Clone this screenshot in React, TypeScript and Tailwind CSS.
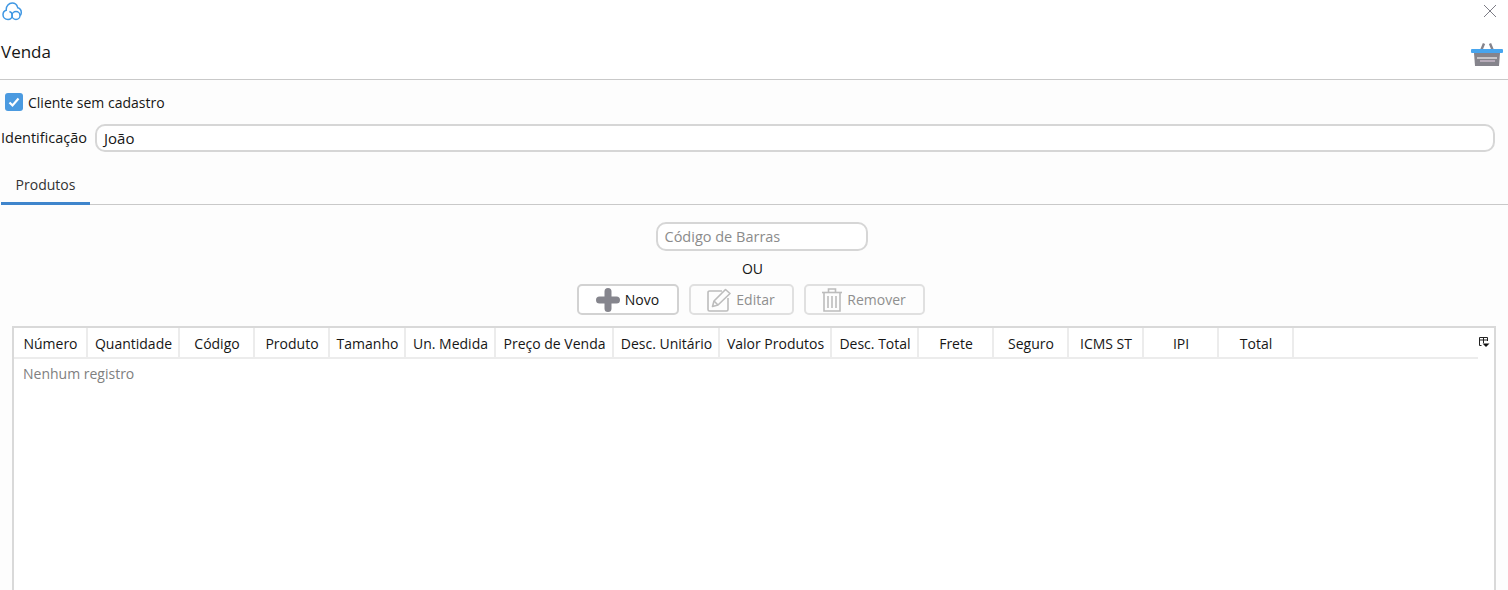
import React from 'react';

const columns = [
  { label: 'Número', width: 'w-[74px]' },
  { label: 'Quantidade', width: 'w-[92px]' },
  { label: 'Código', width: 'w-[75px]' },
  { label: 'Produto', width: 'w-[75px]' },
  { label: 'Tamanho', width: 'w-[76px]' },
  { label: 'Un. Medida', width: 'w-[90px]' },
  { label: 'Preço de Venda', width: 'w-[118px]' },
  { label: 'Desc. Unitário', width: 'w-[106px]' },
  { label: 'Valor Produtos', width: 'w-[112px]' },
  { label: 'Desc. Total', width: 'w-[87px]' },
  { label: 'Frete', width: 'w-[75px]' },
  { label: 'Seguro', width: 'w-[75px]' },
  { label: 'ICMS ST', width: 'w-[75px]' },
  { label: 'IPI', width: 'w-[75px]' },
  { label: 'Total', width: 'w-[75px]' },
];

const CloudIcon = () => (
  <svg width="22" height="22" viewBox="0 0 22 22" fill="none" stroke="#3f97e3" strokeWidth="1.5">
    <path d="M7 19.500C4 19.500 2 17.300 2 14.800C2 12.500 3.500 10.800 5.300 10.300C5.300 10 5.200 9.700 5.200 9.400C5.200 6.200 7.800 3 11.200 3C13.800 3 15.800 4.600 16.500 7" />
    <path d="M7 19.500C9.600 19.500 11.200 17.500 11.200 15.200C11.200 13.400 10 12 8.400 11.500" />
    <circle cx="15" cy="15.500" r="4" />
    <path d="M16 7.500C18.500 8 20.300 10 20.300 12.500C20.300 13.600 19.900 14.600 19.300 15.500" />
  </svg>
);

const CloseIcon = () => (
  <svg width="14" height="14" viewBox="0 0 14 14" stroke="#7d7d86" strokeWidth="1" fill="none">
    <path d="M1 1L13 13M13 1L1 13" />
  </svg>
);

const BasketIcon = () => (
  <svg width="32" height="26" viewBox="0 0 32 26">
    <path d="M9.500 11L13 2.500M22.500 11L19 2.500" stroke="#85848c" strokeWidth="2.400" fill="none" />
    <rect x="0" y="8" width="32" height="4" rx="1" fill="#47a5ee" />
    <path d="M3 12H29L28 25H4Z" fill="#85848c" />
    <path d="M6 17H26" stroke="#f4f4f4" strokeWidth="1.200" />
    <path d="M9 20H24" stroke="#d9c6d9" strokeWidth="1.200" />
  </svg>
);

const PlusIcon = () => (
  <svg width="24" height="24" viewBox="0 0 24 24" fill="none" stroke="#85858d" strokeWidth="7" strokeLinecap="round">
    <path d="M12 3.500V20.500M3.500 12H20.500" />
  </svg>
);

const EditIcon = () => (
  <svg width="24" height="24" viewBox="0 0 24 24" fill="none" stroke="#bcbcbc" strokeWidth="1.600" strokeLinejoin="round">
    <path d="M15 3H2.500A1.500 1.500 0 0 0 1 4.500V21.500A1.500 1.500 0 0 0 2.500 23H19.500A1.500 1.500 0 0 0 21 21.500V10" />
    <path d="M5.500 18.500L7 13L18.500 1.500L23 5.500L11 17Z" />
    <path d="M7 13L11 17" />
  </svg>
);

const TrashIcon = () => (
  <svg width="20" height="24" viewBox="0 0 20 24" fill="none" stroke="#bcbcbc" strokeWidth="1.600">
    <path d="M0 4.500H20" />
    <path d="M6.500 4.500V1H13.500V4.500" />
    <path d="M2 4.500V23H18V4.500" />
    <path d="M6 8V20M10 8V20M14 8V20" />
  </svg>
);

const ColumnPickerIcon = () => (
  <svg width="12" height="12" viewBox="0 0 12 12">
    <path d="M1.500 9.500V1.500H9.500V5M1.500 4H9.500M5.500 1.500V7M1.500 9.500H3.500" stroke="#222" strokeWidth="1" fill="none" />
    <path d="M4.500 7.500H11.500L8 11Z" fill="#111" />
  </svg>
);

export default function App(): React.ReactElement {
  return (
    <div className="h-[590px] w-[1508px] overflow-hidden bg-[#fdfdfd] font-['Open_Sans','Noto_Sans',sans-serif] text-[14px] text-[#161616]">
      <header className="h-[80px] bg-white border-b border-[#c9c9c9] pl-px pr-[5px]">
        <div className="h-[41px] flex justify-between">
          <CloudIcon />
          <div className="pt-[4px] pr-[6px]"><CloseIcon /></div>
        </div>
        <div className="flex justify-between items-start">
          <h1 className="text-[17px] leading-[22px] font-normal">Venda</h1>
          <BasketIcon />
        </div>
      </header>

      <div className="pt-[12px] pl-px">
        <label className="flex items-center gap-[5px] h-[20px] pl-[4px]">
          <span className="w-[18px] h-[18px] rounded-[3px] bg-[#4b9ae0] flex items-center justify-center">
            <svg width="12" height="12" viewBox="0 0 12 12" fill="none" stroke="white" strokeWidth="2.200">
              <path d="M1.500 6.500L4.500 9.500L10.500 2.500" />
            </svg>
          </span>
          <span>Cliente sem cadastro</span>
        </label>

        <div className="mt-[12px] flex items-center gap-[8px] pr-[13px]">
          <span className="text-[14.500px] leading-[28px]">Identificação</span>
          <div className="flex-1 h-[28px] rounded-[10px] border-2 border-[#d6d6d6] bg-white px-[7px] flex items-center text-[15px]">João</div>
        </div>

        <div className="mt-[18px] border-b border-[#c9c9c9] h-[35px]">
          <div className="w-[89px] h-[35px] border-b-[3px] border-[#3f85cc] text-center leading-[29px] text-[#333]">Produtos</div>
        </div>
      </div>

      <div className="flex flex-col items-center pr-[7px]">
        <div className="mt-[17px] ml-[22px] w-[212px] h-[29px] rounded-[10px] border-2 border-[#d6d6d6] bg-white px-[7px] flex items-center text-[14.500px] text-[#8b8b8b]">Código de Barras</div>
        <div className="mt-[8px] ml-[4px] h-[20px] leading-[20px]">OU</div>
        <div className="mt-[5px] flex gap-[10px]">
          <button className="w-[102px] h-[31px] rounded-[5px] border-2 border-[#d2d2d2] bg-white flex items-center justify-center gap-[5px]">
            <PlusIcon />Novo
          </button>
          <button className="w-[105px] h-[31px] rounded-[5px] border-2 border-[#e0e0e0] flex items-center justify-center gap-[5px] text-[#8f8f8f]">
            <EditIcon />Editar
          </button>
          <button className="w-[121px] h-[31px] rounded-[5px] border-2 border-[#e0e0e0] flex items-center justify-center gap-[5px] text-[#8f8f8f]">
            <TrashIcon />Remover
          </button>
        </div>
      </div>

      <div className="mt-[11px] ml-[12px] w-[1484px] h-[300px] border-2 border-[#d9d9d9] bg-white">
        <div className="relative h-[31px] mr-[16px] flex border-b-2 border-[#ececec]">
          {columns.map((col) => (
            <div key={col.label} className={`${col.width} shrink-0 pl-px border-r-2 border-[#ececec] text-center leading-[31px] whitespace-nowrap`}>
              {col.label}
            </div>
          ))}
          <div className="absolute -right-[12px] top-[8px]"><ColumnPickerIcon /></div>
        </div>
        <div className="pl-[9px] pt-[4px] text-[#808080]">Nenhum registro</div>
      </div>
    </div>
  );
}
